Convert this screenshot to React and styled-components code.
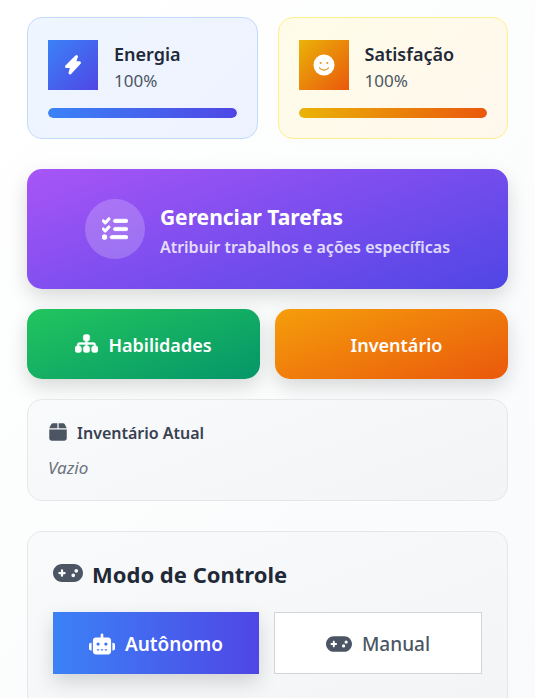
import React from "react";
import styled, { createGlobalStyle, css } from "styled-components";
import { FaBox, FaGamepad, FaListCheck, FaRobot, FaSitemap } from "react-icons/fa6";

const GlobalStyle = createGlobalStyle`
  *, *::before, *::after { box-sizing: border-box; }
  body {
    margin: 0;
    min-height: 100vh;
    background: linear-gradient(135deg, #ffffff 0%, #fcfdfd 50%, #f8fafc 100%);
    font-family: "Noto Sans", "Open Sans", sans-serif;
    color: #1f2937;
  }
  button { font-family: inherit; cursor: pointer; }
  h2, h3, h4, p { margin: 0; }
`;

const Page = styled.main`
  display: flex;
  flex-direction: column;
  padding: 17px 27px 0;
  height: 100vh;
  overflow-y: auto;
  scrollbar-width: none;
  > * { flex-shrink: 0; }
`;

const StatGrid = styled.section`
  display: grid;
  grid-template-columns: 1fr 1fr;
  gap: 20px;
  margin-bottom: 30px;
`;

const tones = {
  energy: { from: "#3b82f6", to: "#4f46e5", bg: "#eff6ff, #eef2ff", border: "#bfdbfe" },
  mood: { from: "#eab308", to: "#ea580c", bg: "#fefce8, #fff7ed", border: "#fef08a" },
};

const StatCard = styled.article`
  padding: 20px;
  border: 1px solid ${({ $tone }) => tones[$tone].border};
  border-radius: 15px;
  background: linear-gradient(135deg, ${({ $tone }) => tones[$tone].bg});
`;

const StatHead = styled.div`
  display: flex;
  align-items: center;
  gap: 16px;
  margin-bottom: 16px;
`;

const StatIcon = styled.div`
  display: grid;
  place-items: center;
  flex: none;
  width: 50px;
  height: 50px;
  color: #ffffff;
  background: linear-gradient(135deg, ${({ $tone }) => `${tones[$tone].from}, ${tones[$tone].to}`});
  svg { display: block; }
`;

const StatName = styled.h3`
  font-size: 18px;
  line-height: 32px;
  font-weight: 600;
`;

const StatValue = styled.p`
  font-size: 17px;
  line-height: 22px;
  color: #4b5563;
`;

const Track = styled.div`
  height: 10px;
  border-radius: 5px;
  overflow: hidden;
  background: #e5e7eb;
`;

const Fill = styled.div`
  height: 100%;
  border-radius: 5px;
  background: linear-gradient(90deg, ${({ $tone }) => `${tones[$tone].from}, ${tones[$tone].to}`});
`;

const raised = css`
  box-shadow: 0 8px 20px rgba(0, 0, 0, 0.15);
`;

const TaskButton = styled.button`
  display: flex;
  align-items: center;
  justify-content: center;
  gap: 15px;
  padding: 30px;
  margin-bottom: 20px;
  border: 0;
  border-radius: 15px;
  color: #ffffff;
  text-align: left;
  background: linear-gradient(160deg, #a855f7, #4f46e5);
  ${raised}
`;

const TaskIcon = styled.span`
  display: grid;
  place-items: center;
  flex: none;
  width: 60px;
  height: 60px;
  border-radius: 50%;
  background: rgba(255, 255, 255, 0.2);
  svg { stroke: #ffffff; stroke-width: 16px; }
`;

const TaskText = styled.span`
  display: flex;
  flex-direction: column;
`;

const TaskTitle = styled.span`
  font-size: 21px;
  line-height: 36px;
  font-weight: 700;
`;

const TaskHint = styled.span`
  font-size: 16px;
  line-height: 24px;
  font-weight: 600;
  opacity: 0.8;
`;

const ActionGrid = styled.section`
  display: grid;
  grid-template-columns: 1fr 1fr;
  gap: 15px;
  margin-bottom: 20px;
`;

const ActionButton = styled.button`
  display: flex;
  align-items: center;
  justify-content: center;
  gap: 10px;
  height: 70px;
  padding: 2px 20px 0 ${({ $indent }) => ($indent ? "30px" : "20px")};
  border: 0;
  border-radius: 15px;
  color: #ffffff;
  font-size: 18px;
  font-weight: 600;
  background: linear-gradient(160deg, ${({ $colors }) => $colors});
  svg { margin-bottom: 4px; stroke: #ffffff; stroke-width: 10px; }
  ${raised}
`;

const Panel = styled.section`
  padding: ${({ $large }) => ($large ? "25px 25px 50px" : "20px")};
  border: 1px solid #e5e7eb;
  border-radius: 15px;
  background: linear-gradient(160deg, #f9fafb, #f3f4f6);
  margin-bottom: 30px;
`;

const InventoryTitle = styled.h4`
  display: flex;
  align-items: center;
  gap: 9px;
  margin-bottom: 8px;
  font-size: 16px;
  line-height: 27px;
  font-weight: 600;
  color: #374151;
  svg { color: #4b5563; margin-bottom: 4px; }
`;

const Empty = styled.p`
  font-size: 17px;
  line-height: 25px;
  font-style: italic;
  color: #6b7280;
`;

const ModeTitle = styled.h2`
  display: flex;
  align-items: center;
  gap: 9px;
  margin-bottom: 20px;
  font-size: 22px;
  line-height: 35px;
  font-weight: 700;
  svg { color: #4b5563; margin-bottom: 4px; }
`;

const ModeRow = styled.div`
  display: flex;
  gap: 15px;
`;

const ModeButton = styled.button`
  display: flex;
  align-items: center;
  justify-content: center;
  gap: 10px;
  flex: 1 1 0;
  height: 62px;
  padding: 2px 15px 0;
  font-size: 19px;
  font-weight: 600;
  ${({ $active }) =>
    $active
      ? css`
          border: 0;
          color: #ffffff;
          background: linear-gradient(90deg, #3b82f6, #4f46e5);
          ${raised}
        `
      : css`
          border: 1px solid #d1d5db;
          color: #4b5563;
          font-weight: 500;
          background: #ffffff;
        `}
`;

const BoltIcon = () => (
  <svg width="18" height="22" viewBox="0 0 18 22" aria-hidden="true">
    <path
      d="M12.500 2.500L10.300 8.700H15.500L6 19L7.900 12.500H2.500Z"
      fill="#ffffff"
      stroke="#ffffff"
      strokeWidth="3"
      strokeLinejoin="round"
    />
  </svg>
);

const SmileIcon = () => (
  <svg width="22" height="22" viewBox="0 0 22 22" aria-hidden="true">
    <circle cx="11" cy="11" r="10.500" fill="#ffffff" />
    <circle cx="7.700" cy="9" r="1.100" fill="#ea9a20" />
    <circle cx="14.300" cy="9" r="1.100" fill="#ea9a20" />
    <path d="M6.600 14c2 2.800 6.800 2.800 8.800 0" fill="none" stroke="#e98a0c" strokeWidth="1.200" strokeLinecap="round" />
  </svg>
);

const stats = [
  { tone: "energy", name: "Energia", value: 100, Icon: BoltIcon },
  { tone: "mood", name: "Satisfação", value: 100, Icon: SmileIcon },
];

export default function App() {
  return (
    <>
      <GlobalStyle />
      <Page>
        <StatGrid>
          {stats.map(({ tone, name, value, Icon }) => (
            <StatCard key={tone} $tone={tone}>
              <StatHead>
                <StatIcon $tone={tone}>
                  <Icon />
                </StatIcon>
                <div>
                  <StatName>{name}</StatName>
                  <StatValue>{value}%</StatValue>
                </div>
              </StatHead>
              <Track role="progressbar" aria-label={name} aria-valuenow={value} aria-valuemin={0} aria-valuemax={100}>
                <Fill $tone={tone} style={{ width: `${value}%` }} />
              </Track>
            </StatCard>
          ))}
        </StatGrid>

        <TaskButton type="button">
          <TaskIcon>
            <FaListCheck size={26} />
          </TaskIcon>
          <TaskText>
            <TaskTitle>Gerenciar Tarefas</TaskTitle>
            <TaskHint>Atribuir trabalhos e ações específicas</TaskHint>
          </TaskText>
        </TaskButton>

        <ActionGrid>
          <ActionButton type="button" $colors="#22c55e, #059669">
            <FaSitemap size={23} />
            Habilidades
          </ActionButton>
          <ActionButton type="button" $colors="#f59e0b, #ea580c" $indent>
            Inventário
          </ActionButton>
        </ActionGrid>

        <Panel>
          <InventoryTitle>
            <FaBox size={20} />
            Inventário Atual
          </InventoryTitle>
          <Empty>Vazio</Empty>
        </Panel>

        <Panel $large>
          <ModeTitle>
            <FaGamepad size={30} />
            Modo de Controle
          </ModeTitle>
          <ModeRow>
            <ModeButton type="button" aria-pressed="true" $active>
              <FaRobot size={26} />
              Autônomo
            </ModeButton>
            <ModeButton type="button" aria-pressed="false">
              <FaGamepad size={26} />
              Manual
            </ModeButton>
          </ModeRow>
        </Panel>
      </Page>
    </>
  );
}
